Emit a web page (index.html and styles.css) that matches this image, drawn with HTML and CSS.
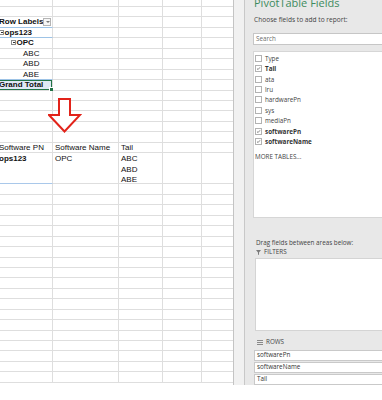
FILE: index.html
```html
<!DOCTYPE html>
<html lang="en">
  <head>
    <meta charset="UTF-8" />
    <meta name="viewport" content="width=device-width, initial-scale=1.0" />
    <title>PivotTable Fields</title>
    <link rel="stylesheet" href="styles.css">
  </head>
  <body>
    <div class="window">
      <div class="sheet">
        <div class="row top"><div></div><div></div><div></div><div></div><div></div></div>
        <div class="row"><div></div><div></div><div></div><div></div><div></div></div>
        <div class="row"><div class="pv-head">Row Labels<span class="dd"></span></div><div></div><div></div><div></div><div></div></div>
        <div class="row"><div class="pv-l1"><span class="tog"></span>ops123</div><div></div><div></div><div></div><div></div></div>
        <div class="row"><div class="pv-l2"><span class="tog"></span>OPC</div><div></div><div></div><div></div><div></div></div>
        <div class="row"><div class="pv-l3">ABC</div><div></div><div></div><div></div><div></div></div>
        <div class="row"><div class="pv-l3">ABD</div><div></div><div></div><div></div><div></div></div>
        <div class="row"><div class="pv-l3 last">ABE</div><div></div><div></div><div></div><div></div></div>
        <div class="row"><div class="pv-total">Grand Total</div><div></div><div></div><div></div><div></div></div>
        <div class="row"><div></div><div></div><div></div><div></div><div></div></div>
        <div class="row"><div></div><div></div><div></div><div></div><div></div></div>
        <div class="row"><div></div><div></div><div></div><div></div><div></div></div>
        <div class="row"><div></div><div></div><div></div><div></div><div></div></div>
        <div class="row"><div></div><div></div><div></div><div></div><div></div></div>
        <div class="row"><div>Software PN</div><div>Software Name</div><div>Tail</div><div></div><div></div></div>
        <div class="row tall"><div class="bold sel">ops123</div><div>OPC</div><div>ABC<br>ABD<br>ABE</div><div></div><div></div></div>
        <div class="row"><div></div><div></div><div></div><div></div><div></div></div>
        <div class="row"><div></div><div></div><div></div><div></div><div></div></div>
        <div class="row"><div></div><div></div><div></div><div></div><div></div></div>
        <div class="row"><div></div><div></div><div></div><div></div><div></div></div>
        <div class="row"><div></div><div></div><div></div><div></div><div></div></div>
        <div class="row"><div></div><div></div><div></div><div></div><div></div></div>
        <div class="row"><div></div><div></div><div></div><div></div><div></div></div>
        <div class="row"><div></div><div></div><div></div><div></div><div></div></div>
        <div class="row"><div></div><div></div><div></div><div></div><div></div></div>
        <div class="row"><div></div><div></div><div></div><div></div><div></div></div>
        <div class="row"><div></div><div></div><div></div><div></div><div></div></div>
        <div class="row"><div></div><div></div><div></div><div></div><div></div></div>
        <div class="row"><div></div><div></div><div></div><div></div><div></div></div>
        <div class="row"><div></div><div></div><div></div><div></div><div></div></div>
        <div class="row"><div></div><div></div><div></div><div></div><div></div></div>
        <div class="row"><div></div><div></div><div></div><div></div><div></div></div>
        <div class="row"><div></div><div></div><div></div><div></div><div></div></div>
        <div class="row"><div></div><div></div><div></div><div></div><div></div></div>
        <div class="row"><div></div><div></div><div></div><div></div><div></div></div>

        <!-- red arrow shape drawn over the grid -->
        <svg class="arrow" width="34" height="37" viewBox="0 0 34 37">
          <polygon points="11,2 22,2 22,18 32,18 16.5,34.5 1,18 11,18" fill="#fff" stroke="#e2231a" stroke-width="2" stroke-linejoin="miter" />
        </svg>
      </div>

      <div class="split"></div>

      <div class="panel">
        <div class="title">PivotTable Fields</div>
        <div class="hint">Choose fields to add to report:</div>
        <div class="search">Search</div>
        <div class="fields">
          <div class="field"><span class="box"></span>Type</div>
          <div class="field on"><span class="box"><svg viewBox="0 0 7 7"><path d="M1.4 3.6 L2.9 5 L5.6 1.8" /></svg></span>Tail</div>
          <div class="field"><span class="box"></span>ata</div>
          <div class="field"><span class="box"></span>lru</div>
          <div class="field"><span class="box"></span>hardwarePn</div>
          <div class="field"><span class="box"></span>sys</div>
          <div class="field"><span class="box"></span>mediaPn</div>
          <div class="field on"><span class="box"><svg viewBox="0 0 7 7"><path d="M1.4 3.6 L2.9 5 L5.6 1.8" /></svg></span>softwarePn</div>
          <div class="field on"><span class="box"><svg viewBox="0 0 7 7"><path d="M1.4 3.6 L2.9 5 L5.6 1.8" /></svg></span>softwareName</div>
          <div class="more">MORE TABLES...</div>
        </div>
        <div class="drag">Drag fields between areas below:</div>
        <div class="area-label">
          <svg width="5" height="5" viewBox="0 0 5 5"><path d="M0 0 H5 L3 2.4 V5 L2 4.4 V2.4 Z" fill="#7a7a7a" /></svg>
          FILTERS
        </div>
        <div class="drop"></div>
        <div class="area-label rows">
          <svg width="6" height="5" viewBox="0 0 6 5"><path d="M0 0.5 H6 M0 2.5 H6 M0 4.5 H6" stroke="#8a8a8a" stroke-width="1" /></svg>
          ROWS
        </div>
        <div class="pill">softwarePn</div>
        <div class="pill">softwareName</div>
        <div class="pill">Tail</div>
      </div>
    </div>
  </body>
</html>
```

FILE: styles.css
```css
* {
  margin: 0;
  padding: 0;
  box-sizing: border-box;
}

body {
  width: 382px;
  height: 400px;
  overflow: hidden;
  background-color: #fff;
  font-family: "Liberation Sans", Arial, sans-serif;
}

.window {
  display: flex;
  height: 385px;
}

/* spreadsheet grid */
.sheet {
  position: relative;
  flex: none;
  width: 237px;
  margin-left: -3px;
  border-right: 1px solid #c4c4c4;
  overflow: hidden;
}

.row {
  display: flex;
  height: 10.444px;
}

.row.top {
  height: 7px;
}

.row.tall {
  height: 31.333px;
}

.row > div {
  position: relative;
  border-right: 1px solid #dedede;
  border-bottom: 1px solid #dedede;
  padding-left: 2px;
  font-size: 8px;
  line-height: 9.4px;
  color: #111;
  white-space: nowrap;
  overflow: hidden;
}

.row > div:nth-child(1) {
  width: 56px;
}

.row > div:nth-child(2) {
  width: 66px;
}

.row > div:nth-child(3) {
  width: 44px;
}

.row > div:nth-child(4) {
  width: 39px;
}

.row > div:nth-child(5) {
  flex: 1;
  border-right: none;
}

.row.tall > div {
  line-height: 10.6px;
  padding-top: 1px;
}

.bold {
  font-weight: bold;
}

.sel {
  border-bottom-color: #a9c8ea !important;
}

/* pivot table */
.pv-head {
  font-weight: bold;
  border-bottom-color: #9dc3e6 !important;
}

.dd {
  position: absolute;
  right: 1px;
  top: 1px;
  width: 8px;
  height: 8px;
  border: 1px solid #b4b4b4;
  background-color: #f6f6f6;
}

.dd::after {
  content: "";
  position: absolute;
  left: 1.5px;
  top: 2px;
  border-left: 2px solid transparent;
  border-right: 2px solid transparent;
  border-top: 2px solid #777;
}

.pv-l1 {
  font-weight: bold;
  border-bottom-color: #9dc3e6 !important;
}

.pv-l2 {
  font-weight: bold;
  padding-left: 14px !important;
}

.pv-l3 {
  padding-left: 26px !important;
}

.pv-l3.last {
  border-bottom-color: #9dc3e6 !important;
}

.tog {
  display: inline-block;
  position: relative;
  width: 5px;
  height: 5px;
  margin-right: 0.5px;
  border: 1px solid #8c8c8c;
  vertical-align: 0;
}

.tog::after {
  content: "";
  position: absolute;
  left: 0.5px;
  right: 0.5px;
  top: 1px;
  height: 1px;
  background-color: #333;
}

.pv-total {
  font-weight: bold;
  overflow: visible !important;
  background-color: #dfe9f5;
  box-shadow: inset 0 0 0 1px #217346;
}

.pv-total::after {
  content: "";
  position: absolute;
  right: -2px;
  bottom: -2px;
  width: 3px;
  height: 3px;
  background-color: #217346;
  border: 0.5px solid #fff;
}

.arrow {
  position: absolute;
  left: 51px;
  top: 97px;
}

/* divider between sheet and task pane */
.split {
  flex: none;
  width: 11px;
  background-color: #f1f1f1;
  border-right: 1px solid #c8c8c8;
}

/* PivotTable Fields pane */
.panel {
  flex: none;
  width: 150px;
  padding-left: 8px;
  background-color: #e8e8e8;
  font-family: "Open Sans", sans-serif;
  font-size: 6.3px;
  color: #444;
}

.title {
  margin-top: -3px;
  padding-left: 1px;
  font-size: 11px;
  line-height: 11px;
  color: #3d8b5e;
  white-space: nowrap;
}

.hint {
  margin-top: 8px;
  padding-left: 1px;
  font-size: 6.6px;
  line-height: 8px;
}

.search {
  margin-top: 9px;
  height: 12px;
  padding-left: 2px;
  line-height: 10px;
  border: 1px solid #c6c6c6;
  background-color: #fff;
  color: #6e6e6e;
}

.fields {
  margin-top: 6px;
  height: 167px;
  padding: 1px 0 0 1px;
  border: 1px solid #d6d6d6;
  background-color: #fff;
}

.field {
  display: flex;
  align-items: center;
  gap: 3px;
  height: 10.444px;
}

.field.on {
  font-weight: bold;
  color: #333;
}

.box {
  flex: none;
  width: 7px;
  height: 7px;
  border: 1px solid #b2b2b2;
  background-color: #fff;
}

.box svg {
  display: block;
  width: 5px;
  height: 5px;
}

.box path {
  fill: none;
  stroke: #444;
  stroke-width: 0.9;
}

.more {
  margin-top: 5px;
  line-height: 10px;
}

.drag {
  margin-top: 21px;
  padding-left: 3px;
  line-height: 8px;
}

.area-label {
  display: flex;
  align-items: center;
  gap: 3px;
  margin-top: 1px;
  padding-left: 3px;
  line-height: 8px;
}

.area-label.rows {
  margin-top: 7px;
  padding-left: 4px;
}

.drop {
  margin-top: 2px;
  margin-left: 2px;
  height: 73px;
  border: 1px solid #d4d4d4;
  background-color: #fff;
}

.pill {
  margin: 1.5px 0 0 1px;
  height: 10.5px;
  padding-left: 2px;
  line-height: 8.5px;
  border: 1px solid #c9c9c9;
  background-color: #fff;
  color: #333;
}

.area-label.rows + .pill {
  margin-top: 4px;
}
```
